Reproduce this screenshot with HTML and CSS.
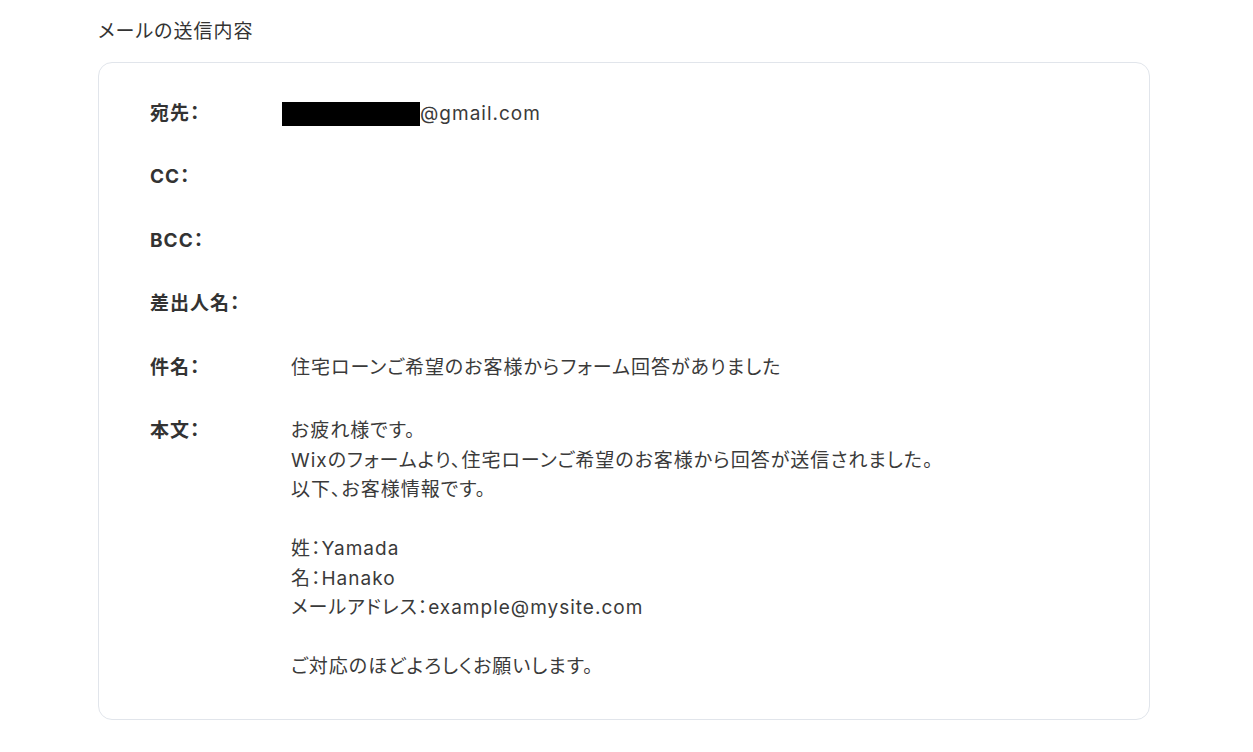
FILE: index.html
```html
<!DOCTYPE html>
<html lang="ja">
<head>
<meta charset="utf-8">
<title>メールの送信内容</title>
<link rel="stylesheet" href="styles.css">
</head>
<body>
<main class="page">
  <h2 class="section-title">メールの送信内容</h2>
  <section class="mail-card">
    <div class="mail-row">
      <div class="mail-label">宛先：</div>
      <div class="mail-value"><span class="redacted"></span>@gmail.com</div>
    </div>
    <div class="mail-row">
      <div class="mail-label">CC：</div>
      <div class="mail-value"></div>
    </div>
    <div class="mail-row">
      <div class="mail-label">BCC：</div>
      <div class="mail-value"></div>
    </div>
    <div class="mail-row">
      <div class="mail-label">差出人名：</div>
      <div class="mail-value"></div>
    </div>
    <div class="mail-row">
      <div class="mail-label">件名：</div>
      <div class="mail-value">住宅ローンご希望のお客様からフォーム回答がありました</div>
    </div>
    <div class="mail-row">
      <div class="mail-label">本文：</div>
      <div class="mail-value">
        <p class="body-line">お疲れ様です。</p>
        <p class="body-line">Wixのフォームより、住宅ローンご希望のお客様から回答が送信されました。</p>
        <p class="body-line">以下、お客様情報です。</p>
        <p class="body-line">&nbsp;</p>
        <p class="body-line">姓：Yamada</p>
        <p class="body-line">名：Hanako</p>
        <p class="body-line">メールアドレス：example@mysite.com</p>
        <p class="body-line">&nbsp;</p>
        <p class="body-line">ご対応のほどよろしくお願いします。</p>
      </div>
    </div>
  </section>
</main>
</body>
</html>
```

FILE: styles.css
```css
* {
  box-sizing: border-box;
}

html, body {
  margin: 0;
  padding: 0;
  background: #ffffff;
}

body {
  font-family: "Inter", "Noto Sans CJK JP", sans-serif;
  color: #333333;
  font-size: 19px;
  line-height: 29.5px;
  letter-spacing: 1px;
  font-feature-settings: "palt";
}

.page {
  padding: 17px 0 0 98px;
  width: 1150px;
}

.section-title {
  margin: 0 0 15px 0;
  font-size: 19px;
  font-weight: 400;
  line-height: 29.5px;
  color: #333333;
}

.mail-card {
  width: 1052px;
  border: 1px solid #e1e5eb;
  border-radius: 14px;
  padding: 36px 40px 37px 51px;
  display: flex;
  flex-direction: column;
  gap: 34px;
}

.mail-row {
  display: flex;
  align-items: flex-start;
  min-height: 29.5px;
}

.mail-label {
  flex: 0 0 141px;
  font-weight: 700;
  color: #333333;
}

.mail-value {
  flex: 1;
  color: #3a3a3a;
}

.redacted {
  display: inline-block;
  width: 138px;
  height: 24px;
  margin-left: -9px;
  background: #000000;
  vertical-align: -6px;
}

.body-line {
  margin: 0;
}
```
